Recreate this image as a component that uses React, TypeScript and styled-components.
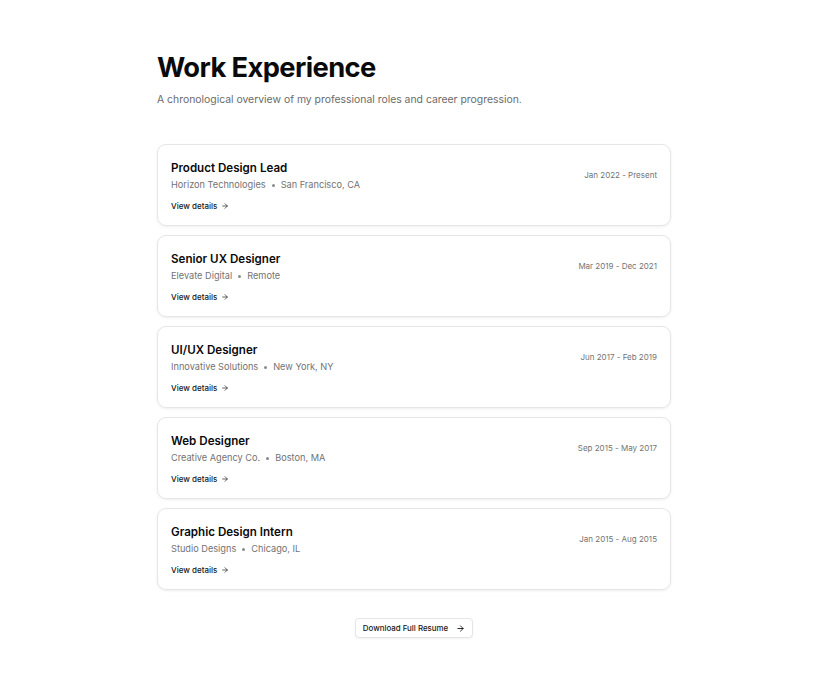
import React from "react";
import styled, { createGlobalStyle } from "styled-components";

const Global = createGlobalStyle`
  html, body { margin: 0; padding: 0; background: #ffffff; }
  body { font-family: Inter, "Noto Sans", sans-serif; color: #0a0a0a; -webkit-font-smoothing: antialiased; }
`;

const Page = styled.main`
  width: 514px;
  margin: 0 auto;
  padding: 50px 0 40px;
  display: flex;
  flex-direction: column;
`;

const Title = styled.h1`
  margin: 0;
  font-size: 27.3px;
  line-height: 36px;
  font-weight: 700;
  letter-spacing: -0.6px;
  color: #0a0a0a;
`;

const Subtitle = styled.p`
  margin: 6px 0 0;
  font-size: 10.4px;
  line-height: 16px;
  color: #6b6b6b;
`;

const List = styled.div`
  margin-top: 36px;
  display: flex;
  flex-direction: column;
  gap: 9px;
`;

const Card = styled.article`
  box-sizing: border-box;
  height: 82px;
  border: 1px solid #e6e6e6;
  border-radius: 9px;
  box-shadow: 0 1px 3px rgba(0, 0, 0, 0.07);
  padding: 15px 13px 13px 13px;
  display: flex;
  justify-content: space-between;
  align-items: flex-start;
`;

const Info = styled.div`
  display: flex;
  flex-direction: column;
`;

const Role = styled.h2`
  margin: 0;
  font-size: 11.6px;
  line-height: 16px;
  font-weight: 600;
  color: #0a0a0a;
`;

const Meta = styled.div`
  margin-top: 2px;
  display: flex;
  align-items: center;
  gap: 6px;
  font-size: 9.2px;
  line-height: 14px;
  color: #737373;
`;

const Dot = styled.span`
  width: 3px;
  height: 3px;
  border-radius: 50%;
  background: #8a8a8a;
`;

const Details = styled.a`
  margin-top: 8px;
  display: inline-flex;
  align-items: center;
  gap: 4px;
  font-size: 8px;
  line-height: 12px;
  font-weight: 500;
  color: #171717;
  text-decoration: none;
`;

const DateText = styled.span`
  margin-top: 9px;
  font-size: 8px;
  line-height: 12px;
  color: #737373;
`;

const Footer = styled.div`
  margin-top: 28px;
  display: flex;
  justify-content: center;
`;

const Button = styled.button`
  box-sizing: border-box;
  height: 20px;
  padding: 0 7px 0 7px;
  display: inline-flex;
  align-items: center;
  gap: 8px;
  border: 1px solid #e5e5e5;
  border-radius: 4px;
  background: #ffffff;
  box-shadow: 0 1px 2px rgba(0, 0, 0, 0.05);
  font-family: inherit;
  font-size: 7.9px;
  font-weight: 500;
  color: #171717;
`;

const Arrow = ({ size, weight }: { size: number; weight: number }) => (
  <svg width={size} height={size} viewBox="0 0 24 24" fill="none" stroke="currentColor" strokeWidth={weight} strokeLinecap="round" strokeLinejoin="round">
    <path d="M5 12h14" />
    <path d="m12 5 7 7-7 7" />
  </svg>
);

const jobs = [
  { role: "Product Design Lead", company: "Horizon Technologies", place: "San Francisco, CA", date: "Jan 2022 - Present" },
  { role: "Senior UX Designer", company: "Elevate Digital", place: "Remote", date: "Mar 2019 - Dec 2021" },
  { role: "UI/UX Designer", company: "Innovative Solutions", place: "New York, NY", date: "Jun 2017 - Feb 2019" },
  { role: "Web Designer", company: "Creative Agency Co.", place: "Boston, MA", date: "Sep 2015 - May 2017" },
  { role: "Graphic Design Intern", company: "Studio Designs", place: "Chicago, IL", date: "Jan 2015 - Aug 2015" },
];

export default function App() {
  return (
    <>
      <Global />
      <Page>
        <Title>Work Experience</Title>
        <Subtitle>A chronological overview of my professional roles and career progression.</Subtitle>
        <List>
          {jobs.map((j) => (
            <Card key={j.role}>
              <Info>
                <Role>{j.role}</Role>
                <Meta>
                  <span>{j.company}</span>
                  <Dot />
                  <span>{j.place}</span>
                </Meta>
                <Details href="#">
                  View details <Arrow size={8} weight={2} />
                </Details>
              </Info>
              <DateText>{j.date}</DateText>
            </Card>
          ))}
        </List>
        <Footer>
          <Button>
            Download Full Resume <Arrow size={9} weight={2.4} />
          </Button>
        </Footer>
      </Page>
    </>
  );
}
